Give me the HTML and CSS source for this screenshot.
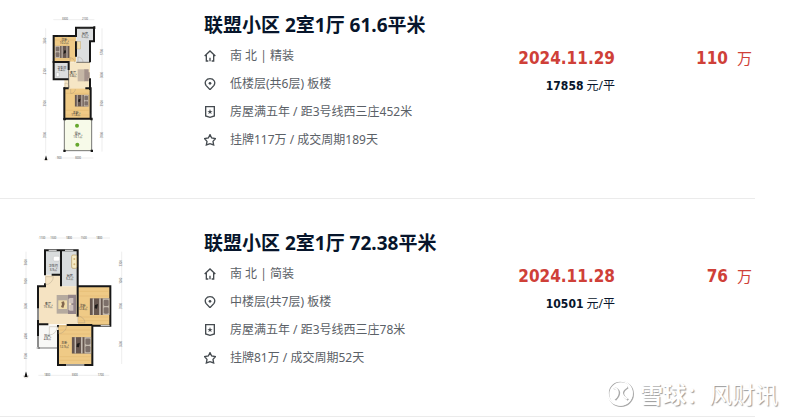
FILE: index.html
```html
<!DOCTYPE html>
<html lang="zh-CN">
<head>
  <meta charset="UTF-8" />
  <title>联盟小区 成交记录</title>
  <link rel="stylesheet" href="styles.css">
</head>
<body>

  <!-- Icons -->
  <svg class="sprite" aria-hidden="true">
    <symbol id="iconHome" viewBox="0 0 36 36">
      <path d="M2 18 L18 3 L34 18 M7 15 V33 H13 M29 15 V33 H23 M18 23 V34" />
    </symbol>
    <symbol id="iconPin" viewBox="0 0 36 36">
      <path d="M18 35 L6 22 C0 12 7 2 18 2 C29 2 36 12 30 22 Z" />
      <circle class="dot" cx="18" cy="16" r="4" />
    </symbol>
    <symbol id="iconBadge" viewBox="0 0 36 36">
      <path d="M5 2 H31 V30 L18 34 L5 30 Z" />
      <path class="dot" d="M18 9 L20 15 H26 L21 18 L23 24 L18 21 L13 24 L15 18 L10 15 H16 Z" />
    </symbol>
    <symbol id="iconStar" viewBox="0 0 36 36">
      <path d="M18 2 L23 12 L34 14 L27 22 L29 33 L18 29 L7 33 L9 22 L2 14 L13 12 Z" />
    </symbol>
    <symbol id="bed" viewBox="0 0 60 50">
      <rect width="60" height="50" fill="#66564f" />
      <rect x="9" width="4" height="50" fill="#c9bfb6" />
      <rect x="29" width="4" height="50" fill="#d8cfc5" />
      <rect x="39" width="21" height="50" fill="#c4baae" />
      <rect x="42" y="4" width="15" height="19" rx="4" fill="#7d706a" />
      <rect x="42" y="27" width="15" height="19" rx="4" fill="#7d706a" />
      <path d="M16 20 L25 17 L22 31 L15 30 Z" fill="#1e1b1a" />
    </symbol>
  </svg>

  <ul class="list">
    <li class="item">
      <a class="plan" href="#" aria-label="户型图 61.6平米">
        <svg viewBox="-60 0 390 465">
          <g class="ruler">
            <path d="M70 29 H193 M47 55 V430 M216 55 V425 M76 444 H190" />
          </g>
          <g class="labels">
            <text x="105" y="31">3300</text><text x="165" y="31">2100</text>
            <text x="88" y="447">900</text><text x="144" y="447">3000</text>
            <text transform="translate(49 92) rotate(-90)">3600</text>
            <text transform="translate(49 184) rotate(-90)">2100</text>
            <text transform="translate(49 280) rotate(-90)">3900</text>
            <text transform="translate(49 375) rotate(-90)">3900</text>
            <text transform="translate(218 126) rotate(-90)">5700</text>
            <text transform="translate(218 195) rotate(-90)">3000</text>
            <text transform="translate(218 280) rotate(-90)">3900</text>
            <text transform="translate(218 375) rotate(-90)">3900</text>
          </g>
          <path fill="#dcdedf" d="M139 53 H192 V94 H180 V156 H139 Z" />
          <path fill="#efca86" d="M71 78 H138 V155 H71 Z M103 235 H180 V326 H103 Z" />
          <path fill="#dcdedf" d="M71 157 H116 V208 H71 Z" />
          <path fill="#f6e6c5" d="M116 157 H180 V235 H103 V210 H116 Z" />
          <path fill="#f7fae9" d="M103 328 H185 V422 H103 Z" />
          <path class="grain" d="M75 90 H135 M75 147 H135 M107 250 H176 M107 301 H176 M107 315 H176" />
          <path class="wall" d="M116 208 H71 V78 H138 V53 H192 V94 H180 V157 M71 156 H116 V180 M138 94 V140 M103 235 V326 H182 V235 H166 M103 235 H116 M180 205 V240" />
          <path class="thin" d="M103 328 V422 H185 V328 M114 78 H84 M116 180 V235 M150 53 H180 M139 157 H180" />
          <path fill="#171717" d="M100 324 h8 v7 h-8z M181 323 h7 v8 h-7z M100 419 h7 v7 h-7z M182 419 h7 v7 h-7z M68 153 h6 v6 h-6z M100 231 h6 v7 h-6z M190 49 h6 v8 h-6z" />
          <use href="#bed" transform="rotate(180 97 126)" x="75" y="108" width="44" height="37" />
          <use href="#bed" x="134" y="253" width="42" height="38" />
          <rect x="141" y="95" width="11" height="22" fill="#f1ddaa" stroke="#ad935f" />
          <path fill="#fff" stroke="#999" d="M79 188 h8 v12 h-8z" />
          <rect x="143" y="178" width="22" height="36" fill="#c6b7a6" />
          <path fill="#a4928b" d="M163 178 h13 v36 h-13z M173 187 h6 v17 h-6z" />
          <path class="door" d="M120 157 v-14 a14 14 0 0 1 14 14 M144 156 v-15 a15 15 0 0 1 15 15 M105 233 v-14 a14 14 0 0 1 14 14 M122 237 v14 a14 14 0 0 0 14 -14" />
          <circle cx="141" cy="347" r="6" fill="#66a72e" /><circle cx="142" cy="404" r="6" fill="#66a72e" />
          <g class="labels rooms">
            <text x="103" y="94">次卧</text><text x="103" y="102">10.2㎡</text>
            <text x="165" y="76">厨房</text><text x="165" y="84">5.2㎡</text>
            <text x="95" y="176">卫生间</text><text x="95" y="184">3.4㎡</text>
            <text x="129" y="192">客厅</text><text x="129" y="200">9.8㎡</text>
            <text x="137" y="311">主卧</text><text x="137" y="319">11.8㎡</text>
            <text x="143" y="375">露台</text><text x="143" y="383">13.1㎡</text>
          </g>
          <path fill="#111" d="M48 436 L52 450 H44 Z" /><path class="door" d="M42 446 a6 6 0 0 0 12 0" />
        </svg>
      </a>
      <div class="info">
        <h2><a href="#">联盟小区 2室1厅 61.6平米</a></h2>
        <p><svg class="icon"><use href="#iconHome" /></svg>南 北 | 精装</p>
        <p><svg class="icon"><use href="#iconPin" /></svg>低楼层(共6层) 板楼</p>
        <p><svg class="icon"><use href="#iconBadge" /></svg>房屋满五年 / 距3号线西三庄452米</p>
        <p><svg class="icon"><use href="#iconStar" /></svg>挂牌117万 / 成交周期189天</p>
      </div>
      <div class="deal">
        <div class="date">2024.11.29</div>
        <div class="unit"><b>17858</b> 元/平</div>
      </div>
      <div class="price"><b>110</b><span>万</span></div>
    </li>

    <li class="item">
      <a class="plan" href="#" aria-label="户型图 72.38平米">
        <svg viewBox="0 -6 390 465">
          <g class="ruler">
            <path d="M85 24 H300 M48 65 V422 M335 65 V402 M85 436 H298" />
          </g>
          <g class="labels">
            <text x="97" y="27">1100</text><text x="130" y="27">1500</text><text x="177" y="27">1800</text><text x="221" y="27">1500</text><text x="268" y="27">1800</text>
            <text x="112" y="439">1800</text><text x="194" y="439">3300</text><text x="272" y="439">1700</text>
            <text transform="translate(50 97) rotate(-90)">3000</text>
            <text transform="translate(50 154) rotate(-90)">1000</text>
            <text transform="translate(50 228) rotate(-90)">3600</text>
            <text transform="translate(50 318) rotate(-90)">2400</text>
            <text transform="translate(50 378) rotate(-90)">1500</text>
            <text transform="translate(337 100) rotate(-90)">3300</text>
            <text transform="translate(337 152) rotate(-90)">1000</text>
            <text transform="translate(337 228) rotate(-90)">3900</text>
            <text transform="translate(337 342) rotate(-90)">3600</text>
          </g>
          <path fill="#d9dcdd" d="M105 61 H203 V169 H153 V134 H105 Z" />
          <path fill="#f5e3c2" d="M105 136 H153 V169 H202 V283 H84 V169 H105 Z" />
          <path fill="#efca86" d="M203 169 H300 V285 H203 Z M144 285 H247 V404 H144 Z" />
          <path fill="#f8f8f6" d="M84 285 H142 V354 H84 Z" />
          <path class="grain" d="M208 184 H295 M208 198 H295 M208 261 H295 M208 272 H295 M149 300 H242 M149 312 H242 M149 380 H242 M149 391 H242" />
          <path class="wall" d="M105 136 V61 H203 V260 M153 61 V134 M125 134 H153 V169 M105 160 V169 H84 V283 H115 M203 169 H301 V287 H247 V405 H144 V300 M170 285 H247 M144 285 V292 M84 285 V350" />
          <path class="window" d="M116 61 H140 M165 61 H190 M84 318 V350 M272 287 H299 M168 405 H223 M84 235 V270" />
          <path class="thin" d="M84 354 H142 M80 354 H90" />
          <use href="#bed" x="239" y="203" width="60" height="54" />
          <use href="#bed" x="185" y="319" width="59" height="54" />
          <rect x="185" y="75" width="15" height="40" rx="4" fill="#f7ecc7" stroke="#b5975c" stroke-width="2" />
          <circle cx="193" cy="87" r="3" fill="#d2b476" /><circle cx="193" cy="103" r="3" fill="#d2b476" />
          <rect x="130" y="79" width="19" height="14" rx="4" fill="#fff" stroke="#aaa" />
          <rect x="140" y="195" width="37" height="56" fill="#b5aa9f" />
          <path fill="#938589" d="M174 194 h24 v58 h-24 v-12 h10 v-34 h-10z" />
          <path fill="#cec1bc" d="M178 204 h12 v16 h-12z M178 225 h12 v17 h-12z" />
          <rect x="145" y="211" width="26" height="26" fill="#f0dda9" />
          <path fill="#80664e" d="M154 216 l8 -2 l2 8 l-4 12 l-7 -3 l3 -8z" />
          <path class="door" d="M107 164 V140 H130 A24 24 0 0 1 107 164 M203 278 V258 A22 22 0 0 1 225 278 Z M118 290 V315 A25 25 0 0 0 142 290 Z M145 288 V311 A25 25 0 0 0 170 288 Z" />
          <g class="labels rooms">
            <text x="130" y="112">卫生间</text><text x="130" y="122">3.9㎡</text>
            <text x="179" y="141">厨房</text><text x="179" y="151">5.2㎡</text>
            <text x="114" y="225">客厅</text><text x="114" y="235">15.9㎡</text>
            <text x="218" y="230">次卧</text><text x="218" y="240">12.8㎡</text>
            <text x="112" y="321">阳台</text><text x="112" y="331">4.8㎡</text>
            <text x="163" y="343">主卧</text><text x="163" y="353">12.9㎡</text>
          </g>
          <path fill="#111" d="M48 424 L53 441 H43 Z" /><path class="door" d="M40 436 a8 8 0 0 0 16 0" />
        </svg>
      </a>
      <div class="info">
        <h2><a href="#">联盟小区 2室1厅 72.38平米</a></h2>
        <p><svg class="icon"><use href="#iconHome" /></svg>南 北 | 简装</p>
        <p><svg class="icon"><use href="#iconPin" /></svg>中楼层(共7层) 板楼</p>
        <p><svg class="icon"><use href="#iconBadge" /></svg>房屋满五年 / 距3号线西三庄78米</p>
        <p><svg class="icon"><use href="#iconStar" /></svg>挂牌81万 / 成交周期52天</p>
      </div>
      <div class="deal">
        <div class="date">2024.11.28</div>
        <div class="unit"><b>10501</b> 元/平</div>
      </div>
      <div class="price"><b>76</b><span>万</span></div>
    </li>
  </ul>

  <!-- Watermark -->
  <div class="watermark">
    <svg viewBox="0 0 84 84">
      <g fill="none" stroke="#a9a9a9" stroke-width="4">
        <circle cx="42" cy="42" r="37" />
        <path d="M20 24 C40 28 42 44 25 60 M63 22 C42 35 45 48 64 60" stroke-width="6" />
      </g>
      <g fill="none" stroke="#fff" stroke-width="5">
        <circle cx="39" cy="39" r="36" />
        <path d="M17 22 C36 26 38 42 22 57 M60 20 C39 33 42 46 61 57" />
      </g>
    </svg>
    <span><b>雪球</b>：风财讯</span>
  </div>

</body>
</html>
```
FILE: styles.css
```css
* {
  margin: 0; padding: 0;
  box-sizing: border-box;
}
body {
  background-color: #fff;
  font-family: "Noto Sans", "Noto Sans CJK SC", sans-serif;
  font-size: 12px;
  color: #5b6167;
  position: relative;
}
a {
  color: inherit;
  text-decoration: none;
}
.sprite {
  display: none;
}
.list {
  list-style: none;
  margin-right: 45px;
}
.item {
  display: grid;
  grid-template-columns: 194px 1fr 150px 137px;
  padding: 29px 3px 33px 10px;
  border-bottom: 1px solid #ebebeb;
}
.item:first-child {
  padding-top: 10px;
}
.plan svg {
  display: block;
  width: 130px;
  height: 155px;
}
.info h2 {
  font-size: 19px;
  line-height: 30px;
  margin-bottom: 2px;
  color: #07152b;
  white-space: nowrap;
}
.info p {
  display: flex;
  align-items: center;
  gap: 14px;
  line-height: 28px;
  white-space: nowrap;
}
.icon {
  width: 12px;
  height: 12px;
  fill: none;
  stroke: #454b50;
  stroke-width: 4;
}
.dot {
  fill: #454b50;
  stroke: none;
}
.deal, .price {
  padding-top: 34px;
  text-align: right;
  line-height: 28px;
}
.date, .deal b, .price b {
  font-family: "DejaVu Sans Condensed", "Noto Sans", sans-serif;
}
.date {
  font-size: 17px;
  font-weight: bold;
  color: #cf4038;
}
.unit {
  color: #07152b;
}
.price {
  display: flex;
  justify-content: flex-end;
  gap: 9px;
  color: #cf4038;
}
.price b {
  font-size: 17px;
}
.price span {
  font-size: 15px;
}

/* floor plans */
.wall {
  fill: none;
  stroke: #171717;
  stroke-width: 6;
}
.thin {
  fill: none;
  stroke: #333;
  stroke-width: 2;
}
.window {
  fill: none;
  stroke: #c8c8c8;
  stroke-width: 4;
}
.door {
  fill: none;
  stroke: #9a8e7d;
  stroke-width: 1;
}
.grain {
  fill: none;
  stroke: #dcad61;
  stroke-width: 1;
}
.ruler {
  fill: none;
  stroke: #ccc;
  stroke-width: 1;
}
.labels {
  font-size: 8px;
  fill: #555;
  text-anchor: middle;
}
.rooms {
  font-size: 9px;
  fill: #333;
}

.watermark {
  position: absolute;
  right: 22px;
  bottom: 6px;
  display: flex;
  align-items: center;
  gap: 5px;
  font-size: 23px;
  line-height: 34px;
  color: #fff;
  text-shadow: 1px 1px 1px #999;
}
.watermark svg {
  width: 28px;
  height: 28px;
}
```
